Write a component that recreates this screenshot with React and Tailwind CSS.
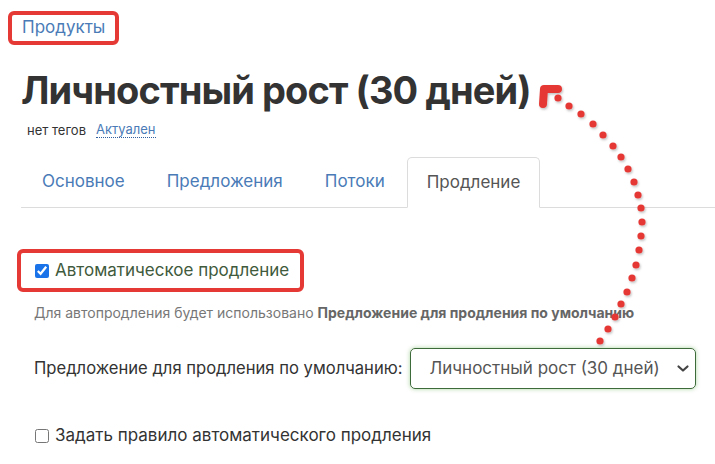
import React from 'react';

const dots = [
  [558, 98], [569, 106], [581, 114], [593, 124], [603, 135], [613, 146], [621, 157],
  [628, 169], [634, 182], [638, 195], [641, 208], [642, 222], [641, 236], [639, 250],
  [636, 265], [632, 278], [627, 292], [621, 304], [615, 317], [608, 329], [600, 341],
];

const Arrow = () => (
  <svg className="absolute left-0 top-0 pointer-events-none" width="715" height="464">
    <defs>
      <filter id="sh" x="-50%" y="-50%" width="200%" height="200%">
        <feDropShadow dx="1" dy="1.5" stdDeviation="0.8" floodColor="#000" floodOpacity="0.25" />
      </filter>
    </defs>
    <g filter="url(#sh)" fill="#e53935">
      <path d="M543 104 L544 89 L558 89" fill="none" stroke="#e53935" strokeWidth="8" strokeLinecap="round" strokeLinejoin="round" />
      {dots.map(([x, y], i) => (
        <circle key={i} cx={x} cy={y} r="3.6" />
      ))}
    </g>
  </svg>
);

const tabs = ['Основное', 'Предложения', 'Потоки'];

export default function App() {
  return (
    <div className="relative w-[715px] h-[464px] overflow-hidden bg-white text-[#333]" style={{ fontFamily: 'Inter, "Noto Sans", sans-serif' }}>
      <div className="pl-[21px] pt-[11px]">
        <div className="inline-flex items-center h-[34px] -ml-[13px] px-[10px] rounded-[6px] border-[4px] border-[#e53935]">
          <a className="text-[17px] text-[#4a7bb7]">Продукты</a>
        </div>

        <h1 className="mt-[21px] text-[38px] leading-[48px] font-bold tracking-[-0.9px] text-[#333]">
          Личностный рост (30 дней)
        </h1>

        <div className="mt-[7px] flex items-center gap-[10px] pl-[6px] text-[13px] leading-[16px]">
          <span className="text-[#333]">нет тегов</span>
          <span className="text-[#4a7bb7] border-b border-dotted border-[#2f5f9f]">Актуален</span>
        </div>

        <div className="mt-[19px] flex border-b border-[#dcdcdc] h-[51px] items-end">
          {tabs.map((t) => (
            <div key={t} className="px-[21px] h-[50px] flex items-center text-[17px] text-[#4a7bb7]">
              {t}
            </div>
          ))}
          <div className="ml-[1px] px-[19px] h-[51px] -mb-px flex items-center text-[17px] text-[#555] bg-white border border-[#dcdcdc] border-b-white rounded-t-[5px] w-[133px]">
            Продление
          </div>
        </div>

        <div className="mt-[41px] -ml-[4px] inline-flex items-center gap-[6px] h-[43px] w-[287px] pl-[14px] rounded-[6px] border-[4px] border-[#e53935]">
          <input type="checkbox" defaultChecked className="w-[14px] h-[14px] accent-[#1a73e8]" />
          <span className="text-[17px] text-[#3f5a3c]">Автоматическое продление</span>
        </div>

        <p className="mt-[10px] pl-[13px] text-[14px] text-[#777]">
          Для автопродления будет использовано <b className="font-bold text-[#666]">Предложение для продления по умолчанию</b>
        </p>

        <div className="mt-[25px] pl-[13px] flex items-center">
          <span className="text-[16.6px] text-[#333]">Предложение для продления по умолчанию:</span>
          <div className="ml-[7px] w-[286px] h-[41px] flex items-center justify-between pl-[19px] pr-[5px] rounded-[5px] border border-[#3d6b3a] shadow-[0_0_4px_rgba(90,170,70,0.5)]">
            <span className="text-[17px] text-[#555]">Личностный рост (30 дней)</span>
            <svg width="14" height="9" viewBox="0 0 14 9" fill="none" stroke="#444" strokeWidth="2.2" strokeLinecap="round" strokeLinejoin="round">
              <path d="M2.5 2.5l4.5 4 4.5-4" />
            </svg>
          </div>
        </div>

        <div className="mt-[34px] pl-[14px] flex items-center gap-[6px]">
          <input type="checkbox" className="w-[14px] h-[14px]" />
          <span className="text-[17px] text-[#333]">Задать правило автоматического продления</span>
        </div>
      </div>
      <Arrow />
    </div>
  );
}
